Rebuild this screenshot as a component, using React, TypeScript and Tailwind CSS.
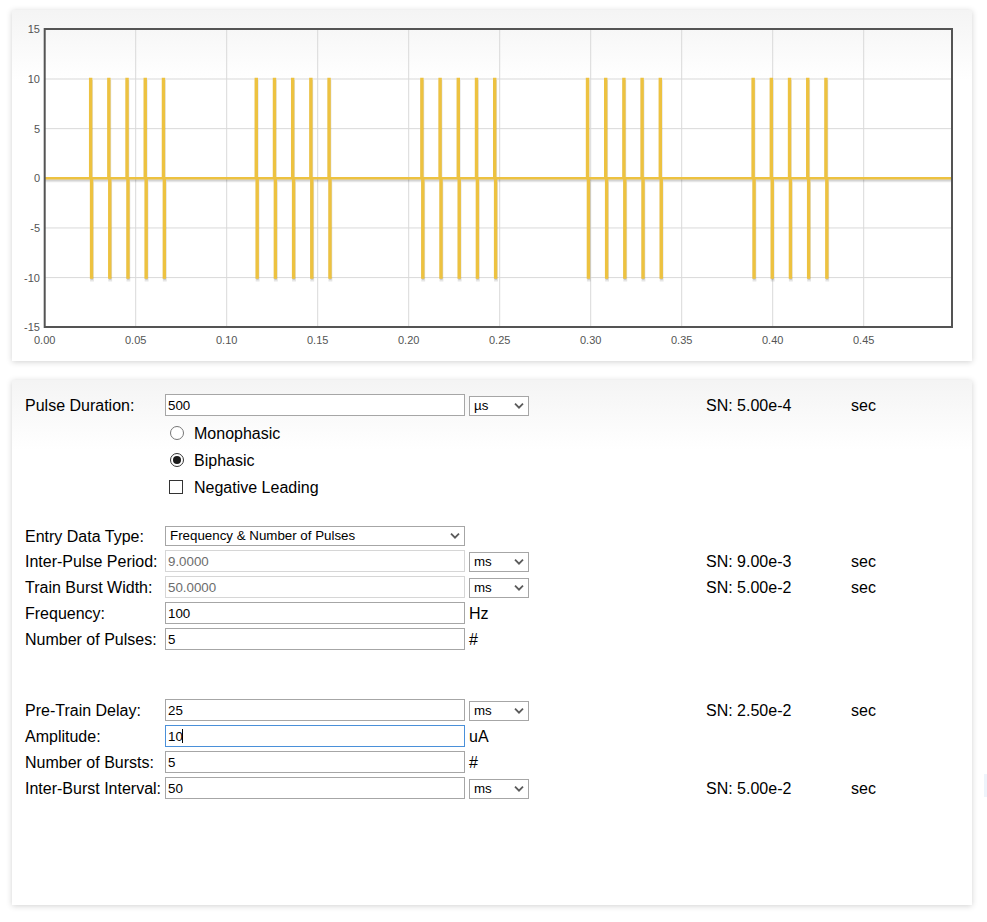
import React from "react";

const X0 = 32.7;
const XS = 1820;
const Y0 = 168.3;
const YS = 9.93;
const px = (t: number) => X0 + t * XS;
const py = (v: number) => Y0 - v * YS;

function buildPath(dx = 0, dy = 0) {
  const pts: [number, number][] = [[0, 0]];
  for (let b = 0; b < 5; b++) {
    const s = 0.025 + b * 0.091;
    for (let p = 0; p < 5; p++) {
      const t = s + p * 0.01;
      pts.push([t, 0], [t, 10], [t + 0.0005, 10], [t + 0.0005, -10], [t + 0.001, -10], [t + 0.001, 0]);
    }
  }
  pts.push([0.4985, 0]);
  return pts
    .map(([t, v], i) => `${i === 0 ? "M" : "L"}${(px(t) + dx).toFixed(2)} ${(py(v) + dy).toFixed(2)}`)
    .join(" ");
}

function Chart() {
  const xt = [0, 0.05, 0.1, 0.15, 0.2, 0.25, 0.3, 0.35, 0.4, 0.45];
  const yt = [15, 10, 5, 0, -5, -10, -15];
  const right = 940;
  const top = 19;
  const bottom = 317;
  return (
    <svg width="960" height="351" viewBox="0 0 960 351" className="block">
      {xt.slice(1).map((t) => (
        <line key={"gx" + t} x1={px(t)} x2={px(t)} y1={top} y2={bottom} stroke="#d9d9d9" strokeWidth="1" />
      ))}
      {[10, 5, 0, -5, -10].map((v) => (
        <line key={"gy" + v} x1={X0} x2={right} y1={py(v)} y2={py(v)} stroke="#d9d9d9" strokeWidth="1" />
      ))}
      <path d={buildPath(0.43, 2.46)} fill="none" stroke="rgba(0,0,0,0.1)" strokeWidth="3" />
      <path d={buildPath(0.3, 1.7)} fill="none" stroke="rgba(0,0,0,0.1)" strokeWidth="1.5" />
      <path d={buildPath()} fill="none" stroke="#edc240" strokeWidth="2.5" />
      <rect x={X0} y={top} width={right - X0} height={bottom - top} fill="none" stroke="#545454" strokeWidth="2" />
      {yt.map((v) => (
        <text key={"ly" + v} x={28} y={py(v) + 4} textAnchor="end" fontSize="11" fill="#545454" fontFamily="'Liberation Sans', Arial, sans-serif">
          {v}
        </text>
      ))}
      {xt.map((t) => (
        <text key={"lx" + t} x={px(t)} y={333.5} textAnchor="middle" fontSize="11" fill="#545454" fontFamily="'Liberation Sans', Arial, sans-serif">
          {t.toFixed(2)}
        </text>
      ))}
    </svg>
  );
}

function Chevron({ color = "#5a5a5a" }: { color?: string }) {
  return (
    <svg width="10" height="7" viewBox="0 0 10 7" className="pointer-events-none absolute right-[5px] top-1/2 -translate-y-1/2">
      <path d="M1 1.2 L5 5.2 L9 1.2" fill="none" stroke={color} strokeWidth="1.8" />
    </svg>
  );
}

function Select({ value, wide }: { value: string; wide?: boolean }) {
  return (
    <div className={wide ? "relative w-[300px] h-[20px]" : "relative w-[60px] h-[20px]"}>
      <select
        value={value}
        onChange={() => {}}
        className="block appearance-none w-full h-full border border-[#a6a6a6] bg-white pl-[4px] text-[13.33px] leading-none text-black outline-none font-['Liberation_Sans',Arial,sans-serif]"
      >
        <option value={value}>{value}</option>
      </select>
      <Chevron />
    </div>
  );
}

function Input({ value, disabled, focused }: { value: string; disabled?: boolean; focused?: boolean }) {
  const cls = disabled
    ? "block w-[300px] h-[22px] border border-[#d6d6d6] bg-white px-[2px] text-[13.33px] text-[#6d6d6d] outline-none font-['Liberation_Sans',Arial,sans-serif]"
    : focused
    ? "block w-[300px] h-[22px] border border-[#4a90d9] bg-white px-[2px] text-[13.33px] text-black outline-none font-['Liberation_Sans',Arial,sans-serif]"
    : "block w-[300px] h-[22px] border border-[#a6a6a6] bg-white px-[2px] text-[13.33px] text-black outline-none font-['Liberation_Sans',Arial,sans-serif]";
  return (
    <div className="relative w-[300px] h-[22px]">
      <input readOnly value={value} className={cls} />
      {focused && <div className="absolute left-[17px] top-[4px] w-px h-[14px] bg-black" />}
    </div>
  );
}

function Row({
  label,
  field,
  unit,
  sn,
  h = "h-[26px]",
}: {
  label?: string;
  field?: React.ReactNode;
  unit?: React.ReactNode;
  sn?: string;
  h?: string;
}) {
  return (
    <div className={`flex items-center ${h}`}>
      <div className="w-[140px] shrink-0 whitespace-nowrap pt-[2px]">{label}</div>
      <div className="w-[304px] shrink-0">{field}</div>
      <div className="w-[237px] shrink-0 pt-[2px]">{unit}</div>
      <div className="w-[145px] shrink-0 pt-[2px]">{sn}</div>
      <div className="pt-[2px]">{sn ? "sec" : ""}</div>
    </div>
  );
}

export default function App() {
  return (
    <div className="relative w-[987px] h-[922px] bg-white text-black text-[16px] font-['Liberation_Sans',Arial,sans-serif]">
      <div className="pt-[10px] pl-[12px]">
        <div className="w-[960px] h-[351px] bg-[linear-gradient(to_bottom,#f4f4f4,#ffffff_70px)] shadow-[0_1px_6px_rgba(0,0,0,0.18)]">
          <Chart />
        </div>
        <div className="mt-[19px] w-[960px] h-[525px] bg-[linear-gradient(to_bottom,#f4f4f4,#ffffff_70px)] shadow-[0_1px_6px_rgba(0,0,0,0.18)] pt-[12px] pl-[13px]">
          <Row label="Pulse Duration:" field={<Input value="500" />} unit={<Select value="µs" />} sn="SN: 5.00e-4" />
          <div className="pl-[140px]">
            <div className="flex items-center h-[28px] pt-[1px]">
              <span className="ml-[5px] w-[14px] h-[14px] rounded-full border border-[#767676] bg-white" />
              <span className="ml-[10px] pt-[2px]">Monophasic</span>
            </div>
            <div className="flex items-center h-[27px]">
              <span className="ml-[5px] w-[14px] h-[14px] rounded-full border border-[#333] bg-white flex items-center justify-center">
                <span className="w-[8px] h-[8px] rounded-full bg-[#1a1a1a]" />
              </span>
              <span className="ml-[10px] pt-[2px]">Biphasic</span>
            </div>
            <div className="flex items-center h-[28px]">
              <span className="ml-[4px] w-[14px] h-[14px] border border-[#333] bg-white" />
              <span className="ml-[11px] pt-[2px]">Negative Leading</span>
            </div>
          </div>
          <div className="h-[23px]" />
          <Row h="h-[24px]" label="Entry Data Type:" field={<Select wide value="Frequency & Number of Pulses" />} />
          <Row label="Inter-Pulse Period:" field={<Input disabled value="9.0000" />} unit={<Select value="ms" />} sn="SN: 9.00e-3" />
          <Row label="Train Burst Width:" field={<Input disabled value="50.0000" />} unit={<Select value="ms" />} sn="SN: 5.00e-2" />
          <Row label="Frequency:" field={<Input value="100" />} unit="Hz" />
          <Row label="Number of Pulses:" field={<Input value="5" />} unit="#" />
          <div className="h-[45px]" />
          <Row label="Pre-Train Delay:" field={<Input value="25" />} unit={<Select value="ms" />} sn="SN: 2.50e-2" />
          <Row label="Amplitude:" field={<Input focused value="10" />} unit="uA" />
          <Row label="Number of Bursts:" field={<Input value="5" />} unit="#" />
          <Row label="Inter-Burst Interval:" field={<Input value="50" />} unit={<Select value="ms" />} sn="SN: 5.00e-2" />
        </div>
      </div>
      <div className="absolute left-[984px] top-[774px] w-[3px] h-[23px] bg-[#eef4fb]" />
    </div>
  );
}
